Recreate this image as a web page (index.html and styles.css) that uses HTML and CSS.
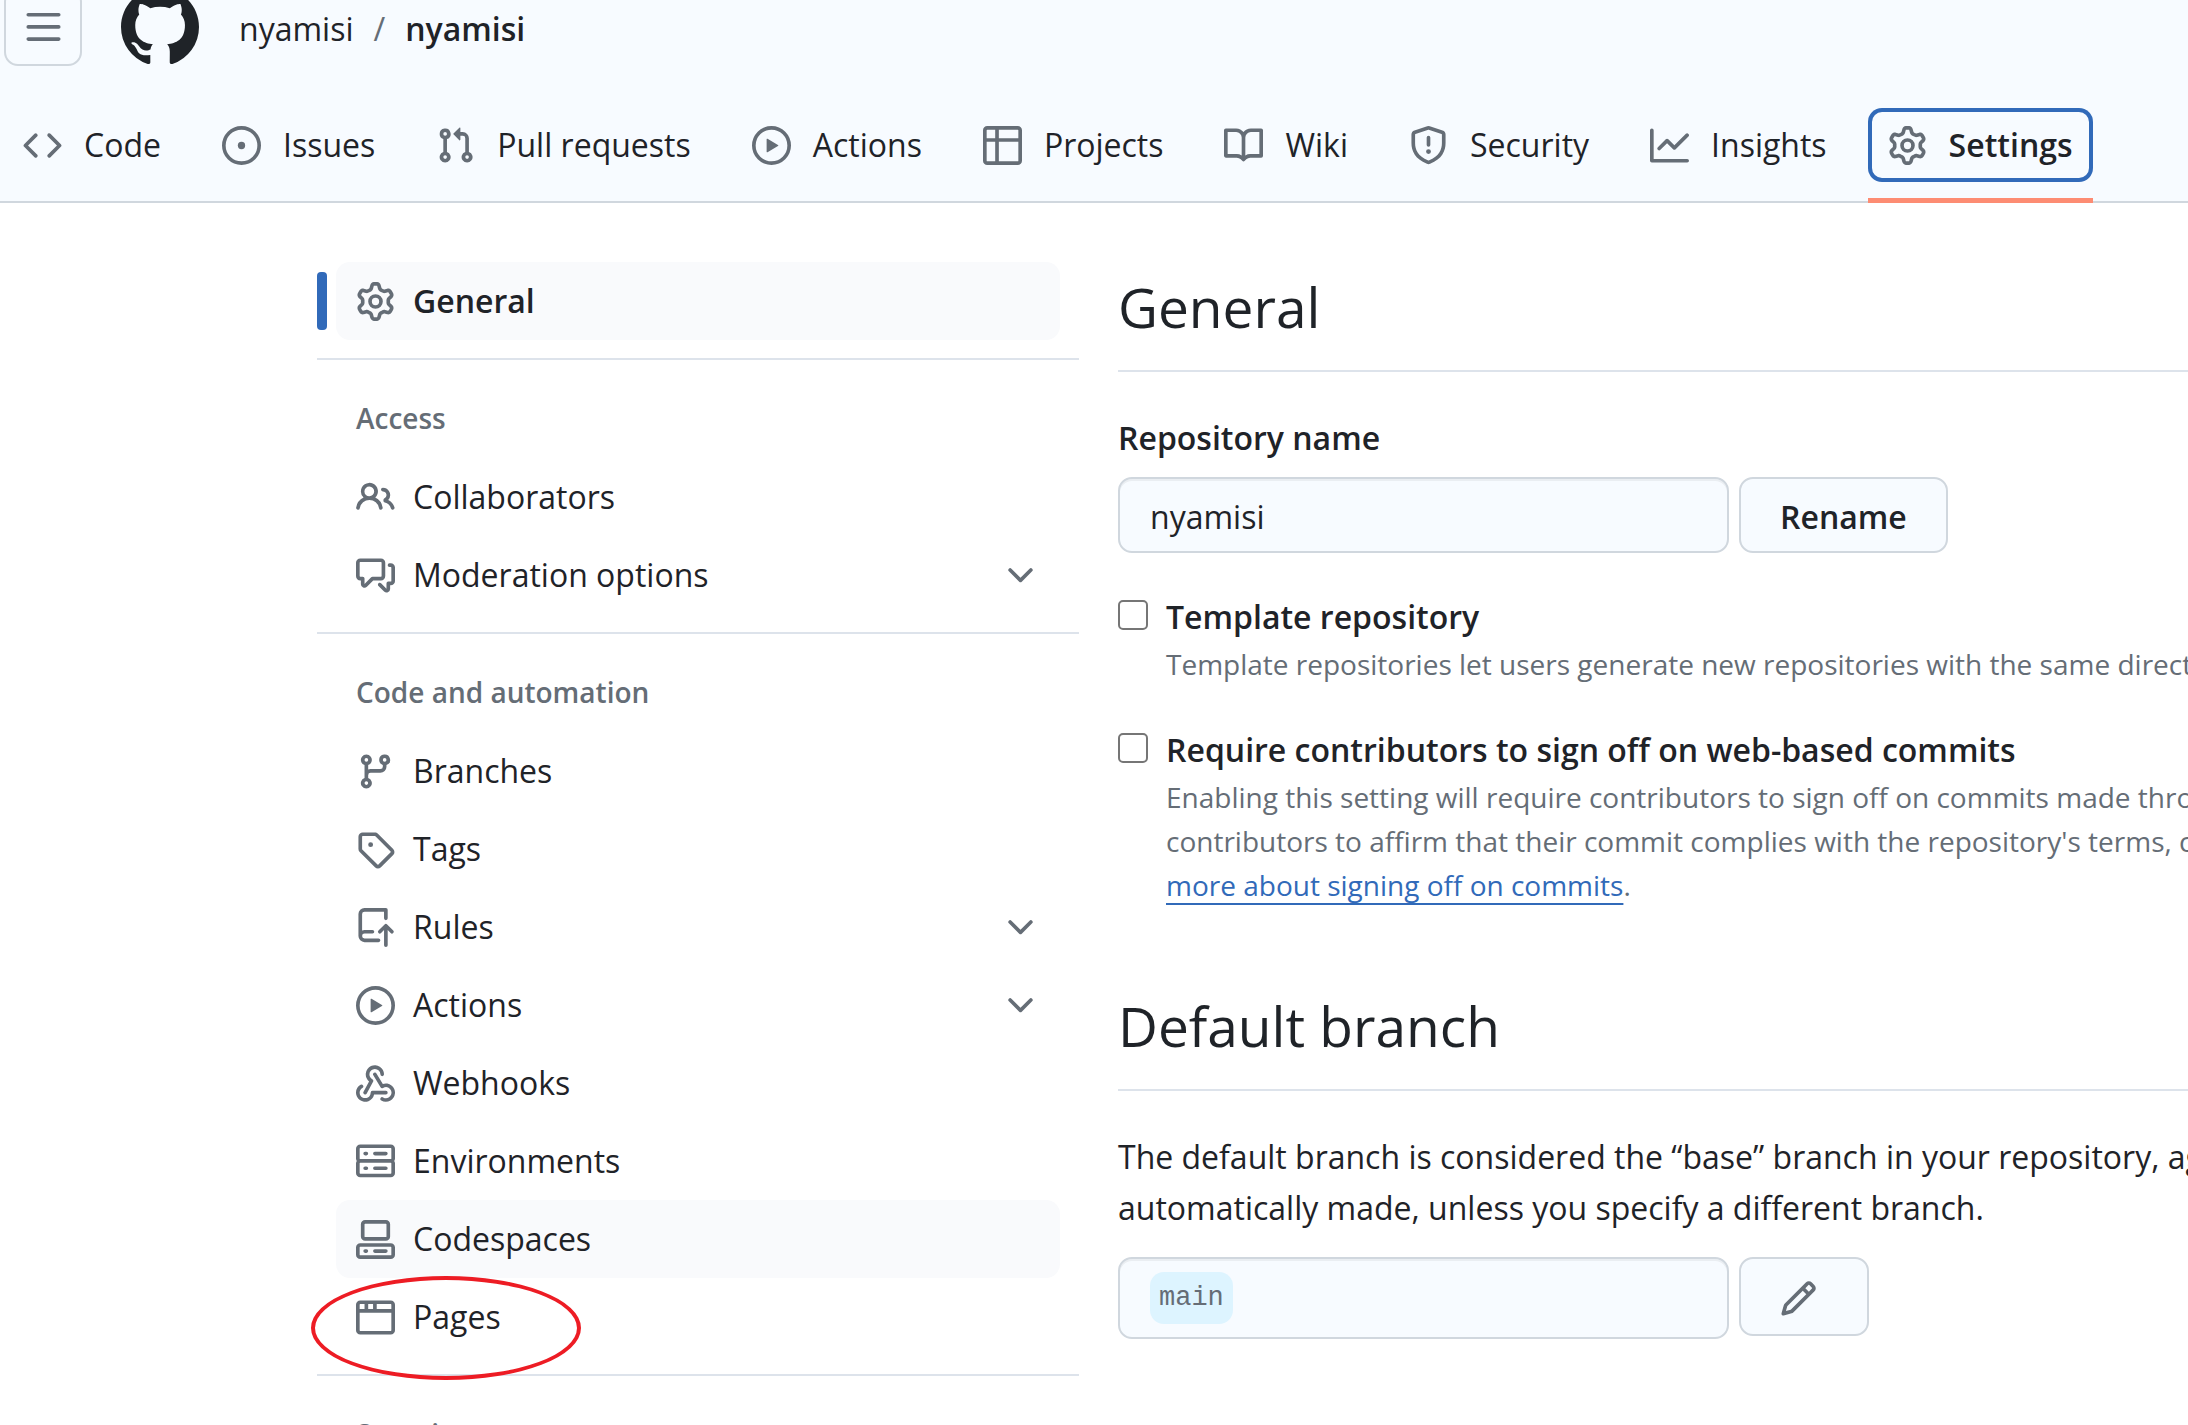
FILE: index.html
```html
<!DOCTYPE html>
<html lang="en">
<head>
<meta charset="utf-8">
<meta name="viewport" content="width=device-width, initial-scale=1">
<title>Settings · nyamisi/nyamisi</title>
<link rel="stylesheet" href="styles.css">
</head>
<body>
<svg class="sprite" aria-hidden="true">
  <symbol id="i-bars" viewBox="0 0 16 16"><path d="M1 2.75A.75.75 0 0 1 1.75 2h12.5a.75.75 0 0 1 0 1.5H1.75A.75.75 0 0 1 1 2.75Zm0 5A.75.75 0 0 1 1.75 7h12.5a.75.75 0 0 1 0 1.5H1.75A.75.75 0 0 1 1 7.75ZM1.75 12h12.5a.75.75 0 0 1 0 1.5H1.75a.75.75 0 0 1 0-1.5Z"/></symbol>
  <symbol id="i-mark" viewBox="0 0 16 16"><path d="M8 0c4.42 0 8 3.58 8 8a8.013 8.013 0 0 1-5.45 7.59c-.4.08-.55-.17-.55-.38 0-.27.01-1.13.01-2.2 0-.75-.25-1.23-.54-1.48 1.78-.2 3.65-.88 3.65-3.95 0-.88-.31-1.59-.82-2.15.08-.2.36-1.02-.08-2.12 0 0-.67-.22-2.2.82-.64-.18-1.32-.27-2-.27-.68 0-1.36.09-2 .27-1.53-1.03-2.2-.82-2.2-.82-.44 1.1-.16 1.92-.08 2.12-.51.56-.82 1.28-.82 2.15 0 3.06 1.86 3.75 3.64 3.95-.23.2-.44.55-.51 1.07-.46.21-1.61.55-2.33-.66-.15-.24-.6-.83-1.23-.82-.67.01-.27.38.01.53.34.19.73.9.82 1.13.16.45.68 1.31 2.69.94 0 .67.01 1.3.01 1.49 0 .21-.15.45-.55.38A7.995 7.995 0 0 1 0 8c0-4.42 3.58-8 8-8Z"/></symbol>
  <symbol id="i-code" viewBox="0 0 16 16"><path d="m11.28 3.22 4.25 4.25a.75.75 0 0 1 0 1.06l-4.25 4.25a.749.749 0 0 1-1.275-.326.749.749 0 0 1 .215-.734L13.94 8l-3.72-3.72a.749.749 0 0 1 .326-1.275.749.749 0 0 1 .734.215Zm-6.56 0a.751.751 0 0 1 1.042.018.751.751 0 0 1 .018 1.042L2.06 8l3.72 3.72a.749.749 0 0 1-.326 1.275.749.749 0 0 1-.734-.215L.47 8.53a.75.75 0 0 1 0-1.06Z"/></symbol>
  <symbol id="i-issue" viewBox="0 0 16 16"><path d="M8 9.5a1.5 1.5 0 1 0 0-3 1.5 1.5 0 0 0 0 3Z"/><path d="M8 0a8 8 0 1 1 0 16A8 8 0 0 1 8 0ZM1.5 8a6.5 6.5 0 1 0 13 0 6.5 6.5 0 0 0-13 0Z"/></symbol>
  <symbol id="i-pull" viewBox="0 0 16 16"><path d="M1.5 3.25a2.25 2.25 0 1 1 3 2.122v5.256a2.251 2.251 0 1 1-1.5 0V5.372A2.25 2.25 0 0 1 1.5 3.25Zm5.677-.177L9.573.677A.25.25 0 0 1 10 .854V2.5h1A2.5 2.5 0 0 1 13.5 5v5.628a2.251 2.251 0 1 1-1.5 0V5a1 1 0 0 0-1-1h-1v1.646a.25.25 0 0 1-.427.177L7.177 3.427a.25.25 0 0 1 0-.354ZM3.75 2.5a.75.75 0 1 0 0 1.5.75.75 0 0 0 0-1.5Zm0 9.5a.75.75 0 1 0 0 1.5.75.75 0 0 0 0-1.5Zm8.25.75a.75.75 0 1 0 1.5 0 .75.75 0 0 0-1.5 0Z"/></symbol>
  <symbol id="i-play" viewBox="0 0 16 16"><path d="M8 0a8 8 0 1 1 0 16A8 8 0 0 1 8 0ZM1.5 8a6.5 6.5 0 1 0 13 0 6.5 6.5 0 0 0-13 0Zm4.879-2.773 4.264 2.559a.25.25 0 0 1 0 .428l-4.264 2.559A.25.25 0 0 1 6 10.559V5.442a.25.25 0 0 1 .379-.215Z"/></symbol>
  <symbol id="i-table" viewBox="0 0 16 16"><path d="M0 1.75C0 .784.784 0 1.75 0h12.5C15.216 0 16 .784 16 1.75v12.5A1.75 1.75 0 0 1 14.25 16H1.75A1.75 1.75 0 0 1 0 14.25ZM6.5 6.5v8h7.75a.25.25 0 0 0 .25-.25V6.5Zm8-1.5V1.75a.25.25 0 0 0-.25-.25H6.5V5Zm-13 1.5v7.75c0 .138.112.25.25.25H5v-8ZM5 5V1.5H1.75a.25.25 0 0 0-.25.25V5Z"/></symbol>
  <symbol id="i-book" viewBox="0 0 16 16"><path d="M0 1.75A.75.75 0 0 1 .75 1h4.253c1.227 0 2.317.59 3 1.501A3.743 3.743 0 0 1 11.006 1h4.245a.75.75 0 0 1 .75.75v10.5a.75.75 0 0 1-.75.75h-4.507a2.25 2.25 0 0 0-1.591.659l-.622.621a.75.75 0 0 1-1.06 0l-.622-.621A2.25 2.25 0 0 0 5.258 13H.75a.75.75 0 0 1-.75-.75Zm7.251 10.324.004-5.073-.002-2.253A2.25 2.25 0 0 0 5.003 2.5H1.5v9h3.757a3.75 3.75 0 0 1 1.994.574ZM8.755 4.75l-.004 7.322a3.752 3.752 0 0 1 1.992-.572H14.5v-9h-3.495a2.25 2.25 0 0 0-2.25 2.25Z"/></symbol>
  <symbol id="i-shield" viewBox="0 0 16 16"><path d="M7.467.133a1.748 1.748 0 0 1 1.066 0l5.25 1.68A1.75 1.75 0 0 1 15 3.48V7c0 1.566-.32 3.182-1.303 4.682-.983 1.498-2.585 2.813-5.032 3.855a1.697 1.697 0 0 1-1.33 0c-2.447-1.042-4.049-2.357-5.032-3.855C1.32 10.182 1 8.566 1 7V3.48a1.75 1.75 0 0 1 1.217-1.667Zm.61 1.429a.25.25 0 0 0-.153 0l-5.25 1.68a.25.25 0 0 0-.174.238V7c0 1.358.275 2.666 1.057 3.86.784 1.194 2.121 2.34 4.366 3.297a.196.196 0 0 0 .154 0c2.245-.956 3.582-2.104 4.366-3.298C13.225 9.666 13.5 8.36 13.5 7V3.48a.251.251 0 0 0-.174-.237l-5.25-1.68ZM8.75 4.75v3a.75.75 0 0 1-1.5 0v-3a.75.75 0 0 1 1.5 0ZM9 10.5a1 1 0 1 1-2 0 1 1 0 0 1 2 0Z"/></symbol>
  <symbol id="i-graph" viewBox="0 0 16 16"><path d="M1.5 1.75V13.5h13.75a.75.75 0 0 1 0 1.5H.75a.75.75 0 0 1-.75-.75V1.75a.75.75 0 0 1 1.5 0Zm14.28 2.53-5.25 5.25a.75.75 0 0 1-1.06 0L7 7.06 4.28 9.78a.751.751 0 0 1-1.042-.018.751.751 0 0 1-.018-1.042l3.25-3.25a.75.75 0 0 1 1.06 0L10 7.94l4.72-4.72a.751.751 0 0 1 1.042.018.751.751 0 0 1 .018 1.042Z"/></symbol>
  <symbol id="i-gear" viewBox="0 0 16 16"><path d="M8 0a8.2 8.2 0 0 1 .701.031C9.444.095 9.99.645 10.16 1.29l.288 1.107c.018.066.079.158.212.224.231.114.454.243.668.386.123.082.233.09.299.071l1.103-.303c.644-.176 1.392.021 1.82.63.27.385.506.792.704 1.218.315.675.111 1.422-.364 1.891l-.814.806c-.049.048-.098.147-.088.294.016.257.016.515 0 .772-.01.147.038.246.088.294l.814.806c.475.469.679 1.216.364 1.891a7.977 7.977 0 0 1-.704 1.217c-.428.61-1.176.807-1.82.63l-1.102-.302c-.067-.019-.177-.011-.3.071a5.909 5.909 0 0 1-.668.386c-.133.066-.194.158-.211.224l-.29 1.106c-.168.646-.715 1.196-1.458 1.26a8.006 8.006 0 0 1-1.402 0c-.743-.064-1.289-.614-1.458-1.26l-.289-1.106c-.018-.066-.079-.158-.212-.224a5.738 5.738 0 0 1-.668-.386c-.123-.082-.233-.09-.299-.071l-1.103.303c-.644.176-1.392-.021-1.82-.63a8.12 8.12 0 0 1-.704-1.218c-.315-.675-.111-1.422.363-1.891l.815-.806c.05-.048.098-.147.088-.294a6.214 6.214 0 0 1 0-.772c.01-.147-.038-.246-.088-.294l-.815-.806C.635 6.045.431 5.298.746 4.623a7.92 7.92 0 0 1 .704-1.217c.428-.61 1.176-.807 1.82-.63l1.102.302c.067.019.177.011.3-.071.214-.143.437-.272.668-.386.133-.066.194-.158.211-.224l.29-1.106C6.009.645 6.556.095 7.299.03 7.53.01 7.764 0 8 0Zm-.571 1.525c-.036.003-.108.036-.137.146l-.289 1.105c-.147.561-.549.967-.998 1.189-.173.086-.34.183-.5.29-.417.278-.97.423-1.529.27l-1.103-.303c-.109-.03-.175.016-.195.045-.22.312-.412.644-.573.99-.014.031-.021.11.059.19l.815.806c.411.406.562.957.53 1.456a4.709 4.709 0 0 0 0 .582c.032.499-.119 1.05-.53 1.456l-.815.806c-.081.08-.073.159-.059.19.162.346.353.677.573.989.02.03.085.076.195.046l1.102-.303c.56-.153 1.113-.008 1.53.27.161.107.328.204.501.29.447.222.85.629.997 1.189l.289 1.105c.029.109.101.143.137.146a6.6 6.6 0 0 0 1.142 0c.036-.003.108-.036.137-.146l.289-1.105c.147-.561.549-.967.998-1.189.173-.086.34-.183.5-.29.417-.278.97-.423 1.529-.27l1.103.303c.109.029.175-.016.195-.045.22-.313.411-.644.573-.99.014-.031.021-.11-.059-.19l-.815-.806c-.411-.406-.562-.957-.53-1.456a4.709 4.709 0 0 0 0-.582c-.032-.499.119-1.05.53-1.456l.815-.806c.081-.08.073-.159.059-.19a6.464 6.464 0 0 0-.573-.989c-.02-.03-.085-.076-.195-.046l-1.102.303c-.56.153-1.113.008-1.53-.27a4.44 4.44 0 0 0-.501-.29c-.447-.222-.85-.629-.997-1.189l-.289-1.105c-.029-.11-.101-.143-.137-.146a6.6 6.6 0 0 0-1.142 0ZM11 8a3 3 0 1 1-6 0 3 3 0 0 1 6 0ZM9.5 8a1.5 1.5 0 1 0-3.001.001A1.5 1.5 0 0 0 9.5 8Z"/></symbol>
  <symbol id="i-people" viewBox="0 0 16 16"><path d="M2 5.5a3.5 3.5 0 1 1 5.898 2.549 5.508 5.508 0 0 1 3.034 4.084.75.75 0 1 1-1.482.235 4 4 0 0 0-7.9 0 .75.75 0 0 1-1.482-.236A5.507 5.507 0 0 1 3.102 8.05 3.493 3.493 0 0 1 2 5.5ZM11 4a3.001 3.001 0 0 1 2.22 5.018 5.01 5.01 0 0 1 2.56 3.012.749.749 0 0 1-.885.954.752.752 0 0 1-.549-.514 3.507 3.507 0 0 0-2.522-2.372.75.75 0 0 1-.574-.73v-.352a.75.75 0 0 1 .416-.672A1.5 1.5 0 0 0 11 5.5.75.75 0 0 1 11 4Zm-5.5-.5a2 2 0 1 0-.001 3.999A2 2 0 0 0 5.5 3.5Z"/></symbol>
  <symbol id="i-comments" viewBox="0 0 16 16"><path d="M1.75 1h8.5c.966 0 1.75.784 1.75 1.75v5.5A1.75 1.75 0 0 1 10.25 10H7.061l-2.574 2.573A1.458 1.458 0 0 1 2 11.543V10h-.25A1.75 1.75 0 0 1 0 8.25v-5.5C0 1.784.784 1 1.75 1ZM1.5 2.75v5.5c0 .138.112.25.25.25h1a.75.75 0 0 1 .75.75v2.19l2.72-2.72a.749.749 0 0 1 .53-.22h3.5a.25.25 0 0 0 .25-.25v-5.5a.25.25 0 0 0-.25-.25h-8.5a.25.25 0 0 0-.25.25Zm13 2a.25.25 0 0 0-.25-.25h-.5a.75.75 0 0 1 0-1.5h.5c.966 0 1.75.784 1.75 1.75v5.5A1.75 1.75 0 0 1 14.25 12H14v1.543a1.458 1.458 0 0 1-2.487 1.03L9.22 12.28a.749.749 0 0 1 .326-1.275.749.749 0 0 1 .734.215l2.22 2.22v-2.19a.75.75 0 0 1 .75-.75h1a.25.25 0 0 0 .25-.25Z"/></symbol>
  <symbol id="i-chevron" viewBox="0 0 16 16"><path d="M12.78 5.22a.749.749 0 0 1 0 1.06l-4.25 4.25a.749.749 0 0 1-1.06 0L3.22 6.28a.749.749 0 1 1 1.06-1.06L8 8.939l3.72-3.719a.749.749 0 0 1 1.06 0Z"/></symbol>
  <symbol id="i-branch" viewBox="0 0 16 16"><path d="M9.5 3.25a2.25 2.25 0 1 1 3 2.122V6A2.5 2.5 0 0 1 10 8.5H6a1 1 0 0 0-1 1v1.128a2.251 2.251 0 1 1-1.5 0V5.372a2.25 2.25 0 1 1 1.5 0v1.836A2.493 2.493 0 0 1 6 7h4a1 1 0 0 0 1-1v-.628A2.25 2.25 0 0 1 9.5 3.25Zm-6 0a.75.75 0 1 0 1.5 0 .75.75 0 0 0-1.5 0Zm8.25-.75a.75.75 0 1 0 0 1.5.75.75 0 0 0 0-1.5ZM4.25 12a.75.75 0 1 0 0 1.5.75.75 0 0 0 0-1.5Z"/></symbol>
  <symbol id="i-tag" viewBox="0 0 16 16"><path d="M1 7.775V2.75C1 1.784 1.784 1 2.75 1h5.025c.464 0 .91.184 1.238.513l6.25 6.25a1.75 1.75 0 0 1 0 2.474l-5.026 5.026a1.75 1.75 0 0 1-2.474 0l-6.25-6.25A1.752 1.752 0 0 1 1 7.775Zm1.5 0c0 .066.026.13.073.177l6.25 6.25a.25.25 0 0 0 .354 0l5.025-5.025a.25.25 0 0 0 0-.354l-6.25-6.25a.25.25 0 0 0-.177-.073H2.75a.25.25 0 0 0-.25.25ZM6 5a1 1 0 1 1 0 2 1 1 0 0 1 0-2Z"/></symbol>
  <symbol id="i-push" viewBox="0 0 16 16"><path d="M1 2.5A2.5 2.5 0 0 1 3.5 0h8.75a.75.75 0 0 1 .75.75v3.5a.75.75 0 0 1-1.5 0V1.5h-8a1 1 0 0 0-1 1v6.708A2.493 2.493 0 0 1 3.5 9h3.25a.75.75 0 0 1 0 1.5H3.5a1 1 0 0 0 0 2h5.75a.75.75 0 0 1 0 1.5H3.5A2.5 2.5 0 0 1 1 11.5Zm13.23 7.79h-.001l-1.224-1.224v6.184a.75.75 0 0 1-1.5 0V9.066L10.28 10.29a.75.75 0 0 1-1.06-1.061l2.505-2.504a.75.75 0 0 1 1.06 0L15.29 9.23a.751.751 0 0 1-.018 1.042.751.751 0 0 1-1.042.018Z"/></symbol>
  <symbol id="i-webhook" viewBox="0 0 16 16"><path d="M5.5 4.25a2.25 2.25 0 0 1 4.5 0 .75.75 0 0 0 1.5 0 3.75 3.75 0 1 0-6.14 2.889l-2.272 4.258a.75.75 0 0 0 1.324.706L7 7.25a.75.75 0 0 0-.309-1.015A2.25 2.25 0 0 1 5.5 4.25Z"/><path d="M7.364 3.607a.75.75 0 0 1 1.03.257l2.608 4.349a3.75 3.75 0 1 1-.628 6.785.75.75 0 0 1 .752-1.299 2.25 2.25 0 1 0-.033-3.88.75.75 0 0 1-1.03-.256L7.107 4.636a.75.75 0 0 1 .257-1.03Z"/><path d="M2.9 8.776A.75.75 0 0 1 2.625 9.8 2.25 2.25 0 1 0 6 11.75a.75.75 0 0 1 .75-.751h5.5a.75.75 0 0 1 0 1.5H7.425a3.751 3.751 0 1 1-5.55-3.998.75.75 0 0 1 1.024.274Z"/></symbol>
  <symbol id="i-server" viewBox="0 0 16 16"><path d="M1.75 1h12.5c.966 0 1.75.784 1.75 1.75v4c0 .372-.116.717-.314 1 .198.283.314.628.314 1v4a1.75 1.75 0 0 1-1.75 1.75H1.75A1.75 1.75 0 0 1 0 12.75v-4c0-.358.109-.707.314-1a1.739 1.739 0 0 1-.314-1v-4C0 1.784.784 1 1.75 1ZM1.5 2.75v4c0 .138.112.25.25.25h12.5a.25.25 0 0 0 .25-.25v-4a.25.25 0 0 0-.25-.25H1.75a.25.25 0 0 0-.25.25Zm.25 5.75a.25.25 0 0 0-.25.25v4c0 .138.112.25.25.25h12.5a.25.25 0 0 0 .25-.25v-4a.25.25 0 0 0-.25-.25ZM7 4.75A.75.75 0 0 1 7.75 4h4.5a.75.75 0 0 1 0 1.5h-4.5A.75.75 0 0 1 7 4.75ZM7.75 10h4.5a.75.75 0 0 1 0 1.5h-4.5a.75.75 0 0 1 0-1.5ZM3 4.75A.75.75 0 0 1 3.75 4h.5a.75.75 0 0 1 0 1.5h-.5A.75.75 0 0 1 3 4.75ZM3.75 10h.5a.75.75 0 0 1 0 1.5h-.5a.75.75 0 0 1 0-1.5Z"/></symbol>
  <symbol id="i-codespaces" viewBox="0 0 16 16"><path d="M0 11.25c0-.966.784-1.75 1.75-1.75h12.5c.966 0 1.75.784 1.75 1.75v3A1.75 1.75 0 0 1 14.25 16H1.75A1.75 1.75 0 0 1 0 14.25Zm2-9.5C2 .784 2.784 0 3.75 0h8.5C13.216 0 14 .784 14 1.75v5a1.75 1.75 0 0 1-1.75 1.75h-8.5A1.75 1.75 0 0 1 2 6.75Zm1.75-.25a.25.25 0 0 0-.25.25v5c0 .138.112.25.25.25h8.5a.25.25 0 0 0 .25-.25v-5a.25.25 0 0 0-.25-.25Zm-2 9.5a.25.25 0 0 0-.25.25v3c0 .138.112.25.25.25h12.5a.25.25 0 0 0 .25-.25v-3a.25.25 0 0 0-.25-.25Z"/><path d="M7 12.75a.75.75 0 0 1 .75-.75h4.5a.75.75 0 0 1 0 1.5h-4.5a.75.75 0 0 1-.75-.75Zm-4 0a.75.75 0 0 1 .75-.75h.5a.75.75 0 0 1 0 1.5h-.5a.75.75 0 0 1-.75-.75Z"/></symbol>
  <symbol id="i-browser" viewBox="0 0 16 16"><path d="M0 2.75C0 1.784.784 1 1.75 1h12.5c.966 0 1.75.784 1.75 1.75v10.5A1.75 1.75 0 0 1 14.25 15H1.75A1.75 1.75 0 0 1 0 13.25ZM14.5 6h-13v7.25c0 .138.112.25.25.25h12.5a.25.25 0 0 0 .25-.25Zm-6-3.5v2h6V2.75a.25.25 0 0 0-.25-.25ZM5 2.5v2h2v-2Zm-3.25 0a.25.25 0 0 0-.25.25V4.5h2v-2Z"/></symbol>
  <symbol id="i-pencil" viewBox="0 0 16 16"><path d="M11.013 1.427a1.75 1.75 0 0 1 2.474 0l1.086 1.086a1.75 1.75 0 0 1 0 2.474l-8.61 8.61c-.21.21-.47.364-.756.445l-3.251.93a.75.75 0 0 1-.927-.928l.929-3.25c.081-.286.235-.547.445-.758l8.61-8.61Zm.176 4.823L9.75 4.81l-6.286 6.287a.253.253 0 0 0-.064.108l-.558 1.953 1.953-.558a.253.253 0 0 0 .108-.064Zm1.238-3.763a.25.25 0 0 0-.354 0L10.811 3.75l1.439 1.44 1.263-1.263a.25.25 0 0 0 0-.354Z"/></symbol>
</svg>

<div class="app">
  <header class="header">
    <div class="topbar">
      <button class="menu-button" type="button" aria-label="Open menu"><svg class="icon"><use href="#i-bars"/></svg></button>
      <a class="logo" href="#" aria-label="Homepage"><svg><use href="#i-mark"/></svg></a>
      <nav class="crumbs" aria-label="Breadcrumb">
        <a href="#">nyamisi</a>
        <span class="slash">/</span>
        <a class="current" href="#">nyamisi</a>
      </nav>
    </div>
    <nav class="tabs" aria-label="Repository">
      <a class="tab" href="#"><svg class="icon"><use href="#i-code"/></svg>Code</a>
      <a class="tab" href="#"><svg class="icon"><use href="#i-issue"/></svg>Issues</a>
      <a class="tab" href="#"><svg class="icon"><use href="#i-pull"/></svg>Pull requests</a>
      <a class="tab" href="#"><svg class="icon"><use href="#i-play"/></svg>Actions</a>
      <a class="tab" href="#"><svg class="icon"><use href="#i-table"/></svg>Projects</a>
      <a class="tab" href="#"><svg class="icon"><use href="#i-book"/></svg>Wiki</a>
      <a class="tab" href="#"><svg class="icon"><use href="#i-shield"/></svg>Security</a>
      <a class="tab" href="#"><svg class="icon"><use href="#i-graph"/></svg>Insights</a>
      <a class="tab selected" href="#" aria-current="page"><svg class="icon"><use href="#i-gear"/></svg>Settings</a>
    </nav>
  </header>

  <div class="layout">
    <nav class="sidebar" aria-label="Settings">
      <ul class="group">
        <li><a class="item active" href="#" aria-current="page"><svg class="icon"><use href="#i-gear"/></svg>General</a></li>
      </ul>
      <h3 class="group-title">Access</h3>
      <ul class="group">
        <li><a class="item" href="#"><svg class="icon"><use href="#i-people"/></svg>Collaborators</a></li>
        <li><button class="item" type="button"><svg class="icon"><use href="#i-comments"/></svg>Moderation options<svg class="icon chevron"><use href="#i-chevron"/></svg></button></li>
      </ul>
      <h3 class="group-title">Code and automation</h3>
      <ul class="group">
        <li><a class="item" href="#"><svg class="icon"><use href="#i-branch"/></svg>Branches</a></li>
        <li><a class="item" href="#"><svg class="icon"><use href="#i-tag"/></svg>Tags</a></li>
        <li><button class="item" type="button"><svg class="icon"><use href="#i-push"/></svg>Rules<svg class="icon chevron"><use href="#i-chevron"/></svg></button></li>
        <li><button class="item" type="button"><svg class="icon"><use href="#i-play"/></svg>Actions<svg class="icon chevron"><use href="#i-chevron"/></svg></button></li>
        <li><a class="item" href="#"><svg class="icon"><use href="#i-webhook"/></svg>Webhooks</a></li>
        <li><a class="item" href="#"><svg class="icon"><use href="#i-server"/></svg>Environments</a></li>
        <li><a class="item hovered" href="#"><svg class="icon"><use href="#i-codespaces"/></svg>Codespaces</a></li>
        <li><a class="item circled" href="#"><svg class="icon"><use href="#i-browser"/></svg>Pages</a></li>
      </ul>
      <h3 class="group-title">Security</h3>
    </nav>

    <main class="content">
      <h2 class="title">General</h2>
      <label class="field-label" for="repo-name">Repository name</label>
      <div class="field-row">
        <input class="text-input" id="repo-name" type="text" value="nyamisi">
        <button class="button" type="button">Rename</button>
      </div>
      <div class="check-row">
        <input class="checkbox" id="template" type="checkbox">
        <div>
          <label class="check-label" for="template">Template repository</label>
          <p class="note">Template repositories let users generate new repositories with the same directory</p>
        </div>
      </div>
      <div class="check-row">
        <input class="checkbox" id="signoff" type="checkbox">
        <div>
          <label class="check-label" for="signoff">Require contributors to sign off on web-based commits</label>
          <p class="note">Enabling this setting will require contributors to sign off on commits made through<br>contributors to affirm that their commit complies with the repository's terms, commonly<br><a href="#">more about signing off on commits</a>.</p>
        </div>
      </div>

      <h2 class="title">Default branch</h2>
      <p class="text">The default branch is considered the “base” branch in your repository, against<br>automatically made, unless you specify a different branch.</p>
      <div class="field-row">
        <div class="branch-box"><code class="branch">main</code></div>
        <button class="button edit" type="button" aria-label="Rename branch"><svg class="icon"><use href="#i-pencil"/></svg></button>
      </div>
    </main>
  </div>
</div>
</body>
</html>
```

FILE: styles.css
```css
:root {
  --fg: #1f2328;
  --muted: #656d76;
  --accent: #316ab9;
  --subtle: #f7fbff;
  --hover: #f9fafc;
  --border: #d0d7de;
  --line: #dde3eb;
}

*,
*::before,
*::after { box-sizing: border-box; }

body {
  margin: 0;
  background: #fff;
  color: var(--fg);
  font-family: "Open Sans", "Noto Sans", sans-serif;
  font-size: 32px;
  line-height: 50px;
}

h2, h3, p, ul { margin: 0; padding: 0; }
ul { list-style: none; }
a { color: inherit; text-decoration: none; }
button, input { font: inherit; color: inherit; }

.sprite { display: none; }

.icon {
  flex: none;
  width: 39px;
  height: 39px;
  fill: var(--muted);
}

.app {
  height: 100vh;
  overflow: hidden;
}

/* Header */

.header {
  background: var(--subtle);
  border-bottom: 2px solid var(--border);
}

.topbar {
  display: flex;
  align-items: center;
  margin-top: -12px;
  padding-left: 4px;
}

.menu-button {
  display: flex;
  align-items: center;
  justify-content: center;
  width: 78px;
  height: 78px;
  padding: 0;
  background: none;
  border: 2px solid var(--border);
  border-radius: 14px;
}

.logo {
  display: flex;
  margin-left: 39px;
}

.logo svg {
  width: 78px;
  height: 78px;
  fill: var(--fg);
}

.crumbs {
  display: flex;
  gap: 20px;
  padding: 3px 0 0 40px;
}

.slash { color: var(--muted); }
.current { font-weight: 600; }

.tabs {
  display: flex;
  gap: 21px;
  padding: 42px 0 19px 3px;
}

.tab {
  position: relative;
  display: flex;
  align-items: center;
  gap: 22px;
  height: 74px;
  padding: 0 20px;
  white-space: nowrap;
}

.tab.selected {
  border-radius: 14px;
  box-shadow: inset 0 0 0 4px var(--accent);
  font-weight: 600;
}

.tab.selected::after {
  content: "";
  position: absolute;
  left: 0;
  right: 0;
  bottom: -21px;
  height: 5px;
  background: #fd8c73;
}

/* Page columns */

.layout {
  display: grid;
  grid-template-columns: 762px minmax(0, 1fr);
  gap: 39px;
  padding: 59px 0 0 317px;
}

/* Sidebar */

.group {
  padding: 0 19px 18px;
  border-bottom: 2px solid var(--line);
}

.group-title {
  padding: 40px 39px 21px;
  color: var(--muted);
  font-size: 28px;
  font-weight: 600;
  line-height: 37px;
}

.item {
  position: relative;
  display: flex;
  align-items: center;
  gap: 18px;
  width: 100%;
  height: 78px;
  padding: 0 20px;
  background: none;
  border: 0;
  border-radius: 14px;
  text-align: left;
}

.item.active,
.item.hovered { background: var(--hover); }

.item.active { font-weight: 600; }

.item.active::before {
  content: "";
  position: absolute;
  top: 10px;
  bottom: 10px;
  left: -19px;
  width: 10px;
  background: var(--accent);
  border-radius: 4px;
}

.chevron { margin-left: auto; }

/* Red ring around the Pages entry */
.item.circled::after {
  content: "";
  position: absolute;
  top: -2px;
  left: -25px;
  width: 270px;
  height: 104px;
  border: 4px solid #ed1c24;
  border-radius: 50%;
}

/* Content */

.content { white-space: nowrap; }

.title {
  padding-bottom: 18px;
  border-bottom: 2px solid var(--line);
  font-size: 55px;
  font-weight: 400;
  line-height: 90px;
}

.field-label {
  display: block;
  margin: 41px 0 14px;
  font-weight: 600;
}

.field-row {
  display: flex;
  align-items: flex-start;
  gap: 10px;
}

.text-input,
.branch-box {
  width: 611px;
  padding: 0 30px;
  background: var(--subtle);
  border: 2px solid var(--border);
  border-radius: 14px;
  box-shadow: inset 0 2px 0 #eaeef2;
}

.text-input {
  height: 76px;
  padding-top: 3px;
}

.button {
  height: 76px;
  padding: 3px 39px 0;
  background: var(--subtle);
  border: 2px solid var(--border);
  border-radius: 14px;
  font-weight: 600;
}

.check-row {
  display: flex;
  gap: 18px;
  margin-top: 39px;
}

.checkbox {
  appearance: none;
  flex: none;
  width: 30px;
  height: 30px;
  margin: 8px 0 0;
  background: #fff;
  border: 2px solid #767676;
  border-radius: 5px;
}

.check-label {
  display: block;
  font-weight: 600;
}

.note {
  color: var(--muted);
  font-size: 28px;
  line-height: 44px;
}

.note a {
  color: var(--accent);
  text-decoration: underline;
  text-decoration-thickness: 2px;
  text-underline-offset: 7px;
}

.check-row + .title { margin-top: 74px; }

.text {
  margin: 40px 0 24px;
  line-height: 51px;
}

.branch-box {
  display: flex;
  align-items: center;
  height: 82px;
}

.branch {
  padding: 0 9px;
  background: #ddf4ff;
  border-radius: 14px;
  color: var(--muted);
  font-family: "Liberation Mono", monospace;
  font-size: 27px;
  line-height: 52px;
}

.button.edit {
  display: flex;
  align-items: center;
  height: 79px;
  padding: 3px 49px 0 38px;
}
```
